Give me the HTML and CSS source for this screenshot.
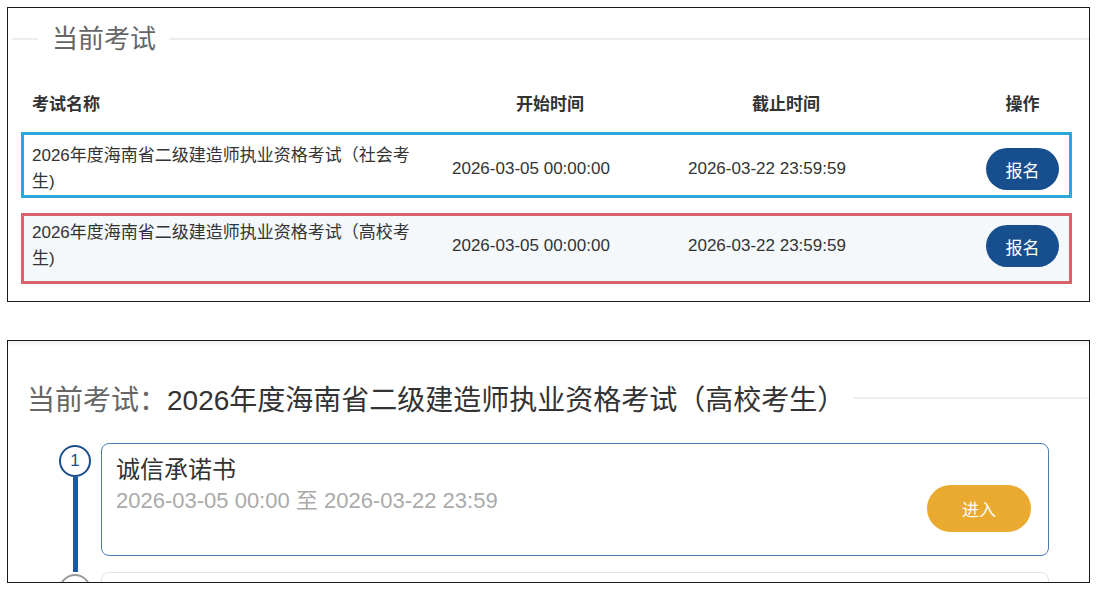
FILE: index.html
```html
<!DOCTYPE html>
<html lang="zh-CN">

<head>
  <meta charset="UTF-8">
  <meta name="viewport" content="width=device-width, initial-scale=1.0">
  <title>当前考试</title>
  <link rel="stylesheet" href="styles.css">
</head>

<body>
  <div class="panel panel--list">
    <div class="legend">
      <span class="legend__line legend__line--short"></span>
      <span class="legend__text">当前考试</span>
      <span class="legend__line"></span>
    </div>
    <div class="exam-table">
      <div class="exam-row exam-row--head">
        <div class="cell cell--name">考试名称</div>
        <div class="cell cell--time">开始时间</div>
        <div class="cell cell--time">截止时间</div>
        <div class="cell cell--op"><span class="op-label">操作</span></div>
      </div>
      <div class="exam-row exam-row--social">
        <div class="cell cell--name">2026年度海南省二级建造师执业资格考试（社会考生)</div>
        <div class="cell cell--time">2026-03-05 00:00:00</div>
        <div class="cell cell--time">2026-03-22 23:59:59</div>
        <div class="cell cell--op"><button class="btn-apply">报名</button></div>
      </div>
      <div class="exam-row exam-row--college">
        <div class="cell cell--name">2026年度海南省二级建造师执业资格考试（高校考生)</div>
        <div class="cell cell--time">2026-03-05 00:00:00</div>
        <div class="cell cell--time">2026-03-22 23:59:59</div>
        <div class="cell cell--op"><button class="btn-apply">报名</button></div>
      </div>
    </div>
  </div>

  <div class="panel panel--current">
    <div class="current-title">
      <span class="current-title__label">当前考试：</span>
      <span class="current-title__name">2026年度海南省二级建造师执业资格考试（高校考生）</span>
      <span class="current-title__line"></span>
    </div>
    <div class="steps">
      <div class="step">
        <div class="step__axis">
          <div class="step__dot">1</div>
          <div class="step__line"></div>
        </div>
        <div class="step__card">
          <div class="step__info">
            <div class="step__title">诚信承诺书</div>
            <div class="step__time">2026-03-05 00:00 至 2026-03-22 23:59</div>
          </div>
          <button class="btn-enter">进入</button>
        </div>
      </div>
      <div class="step">
        <div class="step__axis">
          <div class="step__dot step__dot--todo">2</div>
        </div>
        <div class="step__card step__card--todo"></div>
      </div>
    </div>
  </div>
</body>

</html>
```

FILE: styles.css
```css
    body {
      margin: 0;
      padding: 7px 6px 0 7px;
      font-family: "Liberation Sans", "Noto Sans CJK SC", sans-serif;
      background: #fff;
      color: #333;
    }

    .panel {
      width: 1083px;
      box-sizing: border-box;
      border: 1px solid #1a1a1a;
      background: #fff;
    }

    .panel--list {
      height: 295px;
    }

    .panel--current {
      height: 243px;
      margin-top: 38px;
      overflow: hidden;
      background: linear-gradient(#f1f1f1, #fff 6px);
    }

    /* legend style heading */
    .legend {
      display: flex;
      align-items: center;
      height: 62px;
      padding-left: 4px;
    }

    .legend__line {
      flex: 1;
      height: 2px;
      background: #ededed;
    }

    .legend__line--short {
      flex: 0 0 26px;
    }

    .legend__text {
      padding: 0 13px 0 14px;
      font-size: 26px;
      line-height: 30px;
      color: #666;
    }

    .exam-table {
      padding-left: 13px;
    }

    .exam-row {
      display: grid;
      grid-template-columns: 408px 236px 236px 1fr;
      align-items: center;
      width: 1051px;
      box-sizing: border-box;
      border: 3px solid transparent;
      font-size: 17px;
      line-height: 26px;
      color: #333;
    }

    .exam-row--head {
      height: 40px;
      margin-top: 15px;
      font-weight: bold;
    }

    .exam-row--social {
      margin-top: 7px;
      padding: 8px 0 0;
      border-color: #2ca8dd;
    }

    .exam-row--college {
      margin-top: 15px;
      padding: 4px 0 9px;
      border-color: #d8636b;
      background: #f4f8fb;
    }

    .cell--name {
      padding: 0 15px 0 8px;
    }

    .cell--time {
      padding-left: 20px;
    }

    .exam-row--head .cell--time {
      padding-left: 0;
      text-align: center;
    }

    .cell--op {
      display: flex;
      justify-content: flex-end;
      padding-right: 10px;
    }

    .op-label {
      width: 73px;
      text-align: center;
    }

    .btn-apply {
      width: 73px;
      height: 42px;
      border: none;
      border-radius: 21px;
      background: #174f8e;
      color: #fff;
      font: 17px "Liberation Sans", "Noto Sans CJK SC", sans-serif;
    }

    /* current exam */
    .current-title {
      display: flex;
      align-items: center;
      height: 40px;
      margin-top: 37px;
      padding-left: 19px;
      font-size: 28px;
      white-space: nowrap;
    }

    .current-title__label {
      color: #666;
    }

    .current-title__name {
      color: #333;
    }

    .current-title__line {
      flex: 1;
      height: 2px;
      margin-left: 9px;
      background: #eee;
    }

    .steps {
      margin-top: 25px;
      padding-left: 51px;
    }

    .step {
      display: flex;
      gap: 10px;
    }

    .step__axis {
      display: flex;
      flex-direction: column;
      align-items: center;
      flex-shrink: 0;
      width: 32px;
      padding-top: 2px;
    }

    .step__dot {
      width: 32px;
      height: 32px;
      box-sizing: border-box;
      border: 2px solid #1b4e8c;
      border-radius: 50%;
      background: #fff;
      color: #1b4e8c;
      font-size: 17px;
      line-height: 28px;
      text-align: center;
    }

    .step__dot--todo {
      border-color: #999;
      color: #999;
    }

    .step__line {
      flex: 1;
      width: 5px;
      background: #1a5aa0;
    }

    .step__card {
      display: flex;
      width: 948px;
      height: 113px;
      box-sizing: border-box;
      margin-bottom: 16px;
      padding: 11px 17px 0 14px;
      border: 1px solid #4b7bb5;
      border-radius: 8px;
    }

    .step__card--todo {
      border-color: #e2e2e2;
    }

    .step__info {
      flex: 1;
    }

    .step__title {
      font-size: 24px;
      line-height: 30px;
      color: #333;
    }

    .step__time {
      margin-top: 2px;
      font-size: 22px;
      line-height: 28px;
      color: #aaa;
    }

    .btn-enter {
      width: 104px;
      height: 47px;
      margin-top: 30px;
      border: none;
      border-radius: 24px;
      background: #e9aa2f;
      color: #fff;
      font: 17px "Liberation Sans", "Noto Sans CJK SC", sans-serif;
    }
```
